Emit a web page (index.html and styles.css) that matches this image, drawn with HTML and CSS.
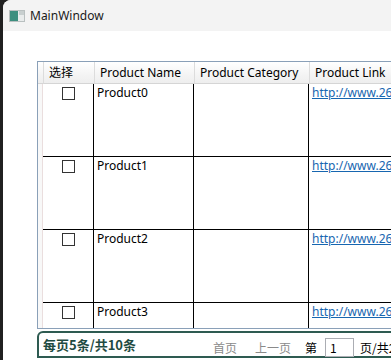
FILE: index.html
```html
<!DOCTYPE html>
<html lang="zh">
<head>
	<meta charset="utf-8">
	<title>MainWindow</title>
	<link rel="stylesheet" href="styles.css">
</head>
<body>
	<div class="window">
		<div class="titlebar">
			<svg class="app-icon" width="16" height="12" viewBox="0 0 16 12">
				<rect x="0.5" y="0.5" width="15" height="11" fill="#e9ecec" stroke="#b9c0c0"/>
				<rect x="1" y="1" width="8" height="10" fill="#3d8f7f"/>
				<rect x="10" y="1" width="5" height="4" fill="#c8cfcf"/>
			</svg>
			<span class="title">MainWindow</span>
		</div>

		<main class="content">
			<div class="datagrid">
				<div class="grid-row header">
					<div class="corner"></div>
					<div class="col-head">选择</div>
					<div class="col-head">Product Name</div>
					<div class="col-head">Product Category</div>
					<div class="col-head">Product Link</div>
				</div>

				<div class="grid-body">
					<div class="grid-row item">
						<div class="row-head"></div>
						<div class="cell check"><span class="box"></span></div>
						<div class="cell">Product0</div>
						<div class="cell"></div>
						<div class="cell"><a href="#">http://www.26.com/product0</a></div>
					</div>
					<div class="grid-row item">
						<div class="row-head"></div>
						<div class="cell check"><span class="box"></span></div>
						<div class="cell">Product1</div>
						<div class="cell"></div>
						<div class="cell"><a href="#">http://www.26.com/product1</a></div>
					</div>
					<div class="grid-row item">
						<div class="row-head"></div>
						<div class="cell check"><span class="box"></span></div>
						<div class="cell">Product2</div>
						<div class="cell"></div>
						<div class="cell"><a href="#">http://www.26.com/product2</a></div>
					</div>
					<div class="grid-row item">
						<div class="row-head"></div>
						<div class="cell check"><span class="box"></span></div>
						<div class="cell">Product3</div>
						<div class="cell"></div>
						<div class="cell"><a href="#">http://www.26.com/product3</a></div>
					</div>
				</div>
			</div>

			<div class="pager">
				<span class="summary">每页5条/共10条</span>
				<span class="pager-nav">
					<span class="pager-link">首页</span>
					<span class="pager-link">上一页</span>
					<span class="pager-text">第</span>
					<span class="page-box">1</span>
					<span class="pager-text">页/共2页</span>
				</span>
			</div>
		</main>
	</div>
</body>
</html>
```

FILE: styles.css
```css
html, body {
	margin: 0;
	padding: 0;
	height: 100%;
	overflow: hidden;
	background: #202020;
	font-family: "Noto Sans", "Noto Sans CJK SC", sans-serif;
	font-size: 12px;
	color: #000;
}

* {
	box-sizing: border-box;
}

.window {
	margin-left: 3px;
	width: 460px;
	height: 360px;
	background: #fff;
	border-top-left-radius: 8px;
	overflow: hidden;
}

.titlebar {
	height: 31px;
	background: #f3f3f3;
	display: flex;
	align-items: center;
	padding-left: 6px;
	gap: 5px;
}

.app-icon {
	display: block;
	margin-top: 1px;
}

.title {
	font-size: 12px;
	color: #1a1a1a;
}

.content {
	padding: 30px 0 0 34px;
}

/* data grid */

.datagrid {
	width: 420px;
	height: 268px;
	border: 1px solid #8aa0b8;
	overflow: hidden;
}

.grid-row {
	display: grid;
	grid-template-columns: 5px 51px 100px 115px 1fr;
}

.header {
	height: 22px;
}

.corner, .col-head {
	background: linear-gradient(#ffffff, #f4f4f4 60%, #eeeeee);
	border-bottom: 1px solid #d5d5d5;
}

.col-head {
	border-left: 1px solid #dcdcdc;
	padding-left: 5px;
	line-height: 21px;
	white-space: nowrap;
}

.grid-body {
	height: 244px;
	overflow: hidden;
}

.item {
	height: 73px;
}

.row-head {
	background: #f8f8f8;
	border-right: 1px solid #eadede;
}

.cell {
	border-bottom: 1px solid #000;
	border-right: 1px solid #000;
	padding: 1px 0 0 3px;
	line-height: 16px;
	white-space: nowrap;
	overflow: hidden;
}

.cell:last-child {
	border-right: none;
}

.cell a {
	color: #1766b0;
	text-decoration: underline;
}

.check {
	display: flex;
	justify-content: center;
	padding: 3px 0 0;
}

.box {
	width: 13px;
	height: 13px;
	border: 1px solid #333;
	background: #fff;
}

/* pager */

.pager {
	margin-top: 2px;
	width: 420px;
	height: 27px;
	border: 2px solid #2e5b51;
	border-top-left-radius: 6px;
	display: flex;
	align-items: center;
	padding-left: 4px;
}

.summary {
	font-family: "Noto Sans CJK SC", sans-serif;
	font-weight: bold;
	font-size: 13px;
	color: #1f4b42;
	width: 170px;
}

.pager-nav {
	display: flex;
	align-items: center;
	font-family: "Noto Sans CJK SC", sans-serif;
	font-size: 12px;
	padding-top: 5px;
}

.pager-link {
	color: #8a8a8a;
	margin-right: 18px;
}

.pager-link + .pager-link {
	margin-right: 14px;
}

.pager-text {
	color: #000;
}

.page-box {
	width: 29px;
	height: 19px;
	margin: 0 6px 0 8px;
	border: 1px solid #abadb3;
	padding-left: 4px;
	line-height: 17px;
}
```
